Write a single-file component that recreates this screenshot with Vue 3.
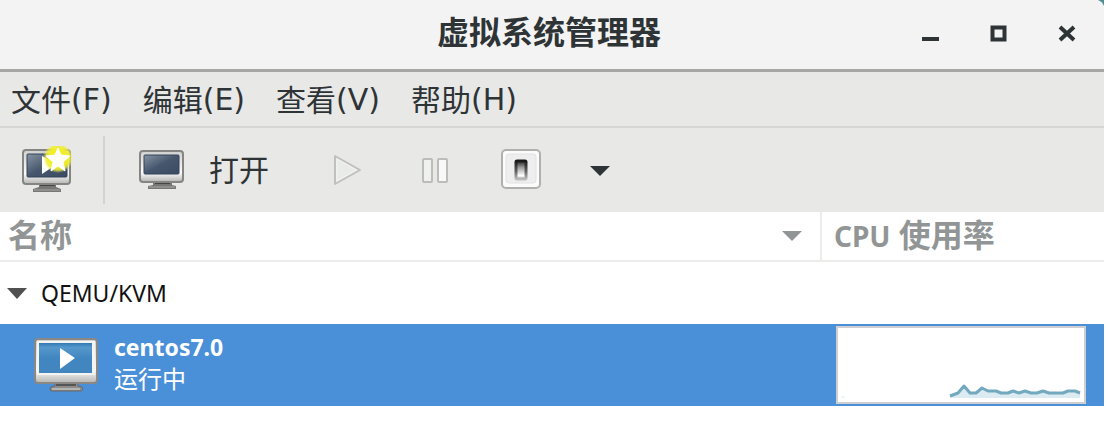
<template>
  <div class="desktop">
    <main class="window">
      <header class="titlebar">
        <h1 class="title">虚拟系统管理器</h1>
        <div class="window-controls">
          <button aria-label="最小化">
            <svg width="18" height="18" viewBox="0 0 18 18"><path d="M0 12h17v4H0z" fill="#2e3436" /></svg>
          </button>
          <button aria-label="最大化">
            <svg width="18" height="18" viewBox="0 0 18 18"><path d="M2.5 2.5h12v12h-12z" fill="none" stroke="#2e3436" stroke-width="4" /></svg>
          </button>
          <button aria-label="关闭">
            <svg width="18" height="18" viewBox="0 0 18 18"><path d="M2 2l14 13M16 2L2 15" stroke="#2e3436" stroke-width="4" /></svg>
          </button>
        </div>
      </header>

      <nav class="menubar">
        <button v-for="menu in menus" :key="menu.key">{{ menu.label }}<span class="mnemonic">({{ menu.key }})</span></button>
      </nav>

      <div class="toolbar">
        <button class="new-vm" aria-label="新建虚拟机">
          <svg width="50" height="48" viewBox="0 0 50 48">
            <defs>
              <linearGradient id="case" x1="0" y1="0" x2="0" y2="1">
                <stop offset="0" stop-color="#d0d0ce" />
                <stop offset="0.7" stop-color="#fafafa" />
                <stop offset="1" stop-color="#b4b4b2" />
              </linearGradient>
              <linearGradient id="screen" x1="0" y1="0" x2="1" y2="1">
                <stop offset="0" stop-color="#8793a3" />
                <stop offset="0.5" stop-color="#46576d" />
                <stop offset="1" stop-color="#3b4b62" />
              </linearGradient>
              <radialGradient id="glow">
                <stop offset="0.6" stop-color="#f0ef28" />
                <stop offset="0.8" stop-color="#eeed38" stop-opacity="0.85" />
                <stop offset="1" stop-color="#eeee66" stop-opacity="0" />
              </radialGradient>
            </defs>
            <path d="M17 38h17v3l5 2v3H11v-3l6-2z" fill="#777775" />
            <path d="M18 38h15v2H18z" fill="#454545" />
            <path d="M12 44h26" stroke="#a9a9a7" stroke-width="1" />
            <rect x="1" y="4" width="47" height="34" rx="3" fill="url(#case)" stroke="#858583" stroke-width="2" />
            <rect x="5" y="8" width="40" height="23" rx="1" fill="url(#screen)" stroke="#33435b" stroke-width="1" />
            <path d="M20 10v18l15-10z" fill="#fff" />
            <circle cx="36" cy="12" r="15" fill="url(#glow)" />
            <path d="M36 2l3 7 9 1-7 6 2 9-7-5-7 5 2-9-7-6 9-1z" fill="#fffffa" stroke="#fffffa" stroke-width="1" stroke-linejoin="round" />
          </svg>
        </button>
        <span class="separator"></span>
        <button class="open">
          <svg width="46" height="42" viewBox="0 0 46 42">
            <path d="M14 33h19v3l4 1v3H9v-3l5-1z" fill="#777775" />
            <path d="M16 33h15v2H16z" fill="#454545" />
            <path d="M10 38h26" stroke="#a9a9a7" stroke-width="1" />
            <rect x="1" y="2" width="43" height="31" rx="3" fill="url(#case)" stroke="#858583" stroke-width="2" />
            <rect x="5" y="6" width="35" height="19" rx="1" fill="url(#screen)" stroke="#33435b" stroke-width="1" />
          </svg>
          <span>打开</span>
        </button>
        <button class="run" aria-label="运行" disabled>
          <svg width="30" height="32" viewBox="0 0 30 32">
            <path d="M2 2v28l25-14z" fill="#e9ebe9" stroke="#c0c0be" stroke-width="2" stroke-linejoin="round" />
            <path d="M4 5v22l19-11z" fill="none" stroke="#f3f4f3" stroke-width="1" />
          </svg>
        </button>
        <button class="pause" aria-label="暂停" disabled>
          <svg width="28" height="28" viewBox="0 0 28 28">
            <rect x="2" y="3" width="9" height="23" rx="1" fill="#eff1ef" stroke="#bcbcb9" stroke-width="2" />
            <rect x="17" y="3" width="9" height="23" rx="1" fill="#f8f8f8" stroke="#bcbcb9" stroke-width="2" />
          </svg>
        </button>
        <button class="shutdown" aria-label="关机">
          <svg width="42" height="42" viewBox="0 0 42 42">
            <defs>
              <linearGradient id="rocker" x1="0" y1="0" x2="0" y2="1">
                <stop offset="0" stop-color="#222" />
                <stop offset="0.35" stop-color="#999" />
                <stop offset="0.8" stop-color="#fff" />
                <stop offset="1" stop-color="#ccc" />
              </linearGradient>
              <linearGradient id="rim" x1="0" y1="0" x2="0" y2="1">
                <stop offset="0" stop-color="#171717" />
                <stop offset="0.6" stop-color="#666" />
                <stop offset="1" stop-color="#bbb" />
              </linearGradient>
            </defs>
            <rect x="1" y="1" width="38" height="38" rx="4" fill="#fbfbfb" stroke="#b0b0ae" stroke-width="2" />
            <rect x="5" y="5" width="30" height="29" rx="3" fill="#eee" stroke="#e2e2e2" stroke-width="1" />
            <rect x="15" y="12" width="10" height="18" rx="1" fill="url(#rocker)" stroke="url(#rim)" stroke-width="3" />
          </svg>
        </button>
        <button class="shutdown-menu" aria-label="关机选项">
          <svg width="20" height="12" viewBox="0 0 20 12"><path d="M0 2h20L10 12z" fill="#2e3436" /></svg>
        </button>
      </div>

      <table class="vm-list">
        <colgroup>
          <col>
          <col class="cpu-col">
        </colgroup>
        <thead>
          <tr>
            <th>
              <div class="sortable">
                <span>名称</span>
                <svg width="20" height="12" viewBox="0 0 20 12"><path d="M0 2h20L10 12z" fill="#929595" /></svg>
              </div>
            </th>
            <th><span class="latin">CPU</span> 使用率</th>
          </tr>
        </thead>
        <tbody>
          <tr class="host">
            <td colspan="2">
              <div class="host-name">
                <svg width="20" height="12" viewBox="0 0 20 12"><path d="M0 1h20L10 12z" fill="#505050" /></svg>
                <span>QEMU/KVM</span>
              </div>
            </td>
          </tr>
          <tr class="vm">
            <td>
              <div class="vm-info">
                <svg width="66" height="56" viewBox="0 0 66 56">
                  <defs>
                    <linearGradient id="vm-screen" x1="0" y1="0" x2="0" y2="1">
                      <stop offset="0" stop-color="#3179b5" />
                      <stop offset="0.15" stop-color="#5598cb" />
                      <stop offset="0.5" stop-color="#4086c0" />
                      <stop offset="1" stop-color="#4386bf" />
                    </linearGradient>
                  </defs>
                  <path d="M22 46h23v3l4 1q2 4-2 4H19q-3 0-1-4l4-1z" fill="#8c8c8a" stroke="#686868" stroke-width="1" />
                  <path d="M23 46h20v3H23z" fill="#555" />
                  <path d="M19 52h28" stroke="#b4b4b2" stroke-width="2" />
                  <rect x="2" y="2" width="62" height="44" rx="3" fill="url(#case)" stroke="#8b8782" stroke-width="2" />
                  <rect x="4" y="4" width="58" height="34" fill="#f4f4f2" />
                  <rect x="6" y="6" width="53" height="30" fill="url(#vm-screen)" />
                  <path d="M27 11v21l15-11z" fill="#fff" />
                </svg>
                <div class="vm-text">
                  <strong>centos7.0</strong>
                  <span class="state">运行中</span>
                </div>
              </div>
            </td>
            <td>
              <div class="graph">
                <svg width="246" height="74" viewBox="0 0 246 74">
                  <polygon :points="`112,70 ${usage} 242,70`" fill="#dcebf1" />
                  <polyline :points="usage" fill="none" stroke="#72a9bf" stroke-width="3" stroke-linejoin="round" />
                  <path d="M3 69h4" stroke="#dcebf1" stroke-width="1" />
                </svg>
              </div>
            </td>
          </tr>
        </tbody>
      </table>
    </main>
  </div>
</template>

<script setup>
const menus = [
  { label: '文件', key: 'F' },
  { label: '编辑', key: 'E' },
  { label: '查看', key: 'V' },
  { label: '帮助', key: 'H' }
];

// cpu history, newest sample on the right
const usage = [
  [112, 68], [120, 65], [126, 58], [132, 65], [138, 65], [144, 60],
  [150, 63], [158, 63], [163, 65], [170, 65], [175, 63], [181, 65],
  [187, 63], [193, 65], [199, 65], [205, 63], [211, 65], [225, 65],
  [230, 63], [237, 63], [242, 65]
].map(p => p.join(',')).join(' ');
</script>

<style>
body {
  margin: 0;
  background: #fff;
}
</style>

<style scoped>
.desktop {
  padding-right: 4px;
  font-family: "Noto Sans", "Noto Sans CJK SC", sans-serif;
  color: #2e3436;
}

.window {
  background: linear-gradient(225deg, #4f8f94 4px, transparent 5px);
}

button {
  display: flex;
  align-items: center;
  padding: 0;
  border: 0;
  background: none;
  color: inherit;
  font: inherit;
}

svg {
  display: block;
  flex: none;
}

.titlebar {
  display: grid;
  grid-template-columns: 1fr auto 1fr;
  align-items: center;
  height: 69px;
  background: #f3f3f3;
  border-bottom: 3px solid #a7a7a4;
  border-radius: 0 8px 0 0;
}

.title {
  grid-column: 2;
  margin: 0;
  padding: 0 6px 6px 0;
  font-size: 32px;
  line-height: 40px;
}

.window-controls {
  display: flex;
  justify-content: flex-end;
  gap: 50px;
  padding: 0 28px 2px 0;
}

.menubar {
  display: flex;
  gap: 31px;
  height: 52px;
  padding: 2px 0 0 11px;
  background: #e8e8e7;
  border-bottom: 2px solid #d6d6d4;
  font-size: 30px;
  line-height: 40px;
}

.mnemonic {
  font-family: "DejaVu Sans", sans-serif;
}

.toolbar {
  display: flex;
  align-items: center;
  height: 84px;
  padding-left: 22px;
  background: #e8e8e7;
}

.separator {
  width: 2px;
  height: 68px;
  margin: 0 34px 0 31px;
  background: #d3d3d1;
}

.open {
  gap: 24px;
  font-size: 30px;
  line-height: 40px;
}

.run {
  margin-left: 64px;
}

.pause {
  margin-left: 58px;
}

.shutdown {
  margin-left: 52px;
}

.shutdown-menu {
  margin-left: 47px;
}

.vm-list {
  width: 100%;
  table-layout: fixed;
  border-collapse: separate;
  border-spacing: 0;
  background: #fff;
}

.cpu-col {
  width: 284px;
}

th {
  height: 46px;
  padding: 0 0 2px 8px;
  border-bottom: 2px solid #ececeb;
  color: #929595;
  font-size: 32px;
  line-height: 40px;
  text-align: left;
}

th + th {
  padding-left: 12px;
  border-left: 2px solid #ececeb;
}

.latin {
  font-size: 28px;
}

td {
  padding: 0;
}

.sortable {
  display: flex;
  align-items: center;
  justify-content: space-between;
  padding-right: 18px;
}

.host td {
  height: 62px;
}

.host-name {
  display: flex;
  align-items: center;
  gap: 14px;
  padding-left: 7px;
  color: #111;
  font-size: 23px;
}

.vm td {
  height: 82px;
  background: #4a90d9;
  color: #fff;
}

.vm-info {
  display: flex;
  align-items: center;
  gap: 15px;
  padding-left: 33px;
}

.vm-text {
  display: flex;
  flex-direction: column;
  padding-bottom: 4px;
  font-size: 23px;
  line-height: 32px;
}

.state {
  font-size: 24px;
}

.graph {
  margin: 0 18px 0 16px;
  border: 2px solid #cfcfd1;
  background: #fff;
}
</style>
